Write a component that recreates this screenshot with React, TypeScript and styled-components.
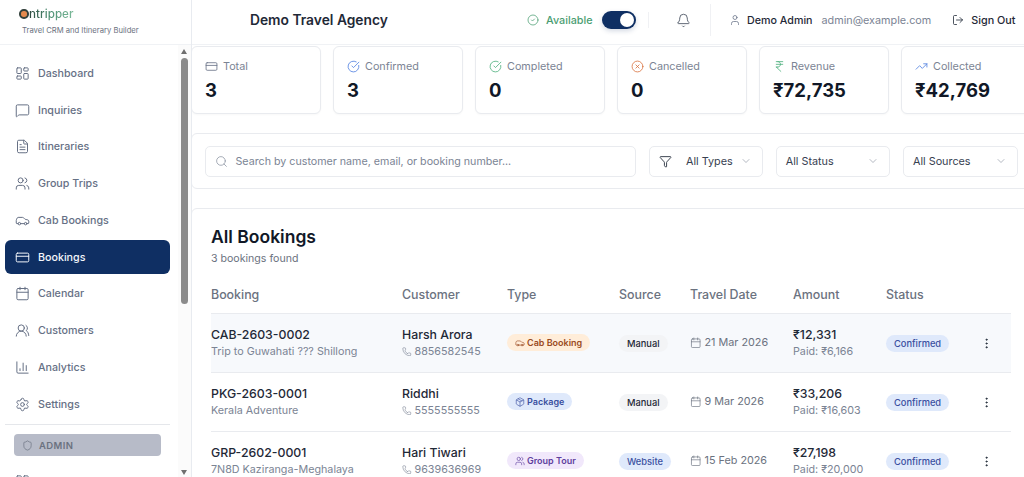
import React from "react";
import styled, { createGlobalStyle } from "styled-components";
import {
  Bell, Calendar, Car, ChartColumn, ChevronDown, CircleCheck, CircleCheckBig, CircleX, CreditCard,
  FileText, Filter, IndianRupee, LayoutDashboard, LogOut, MessageSquare, MoreVertical, Package,
  Phone, Search, Settings, Shield, TrendingUp, User, Users, UsersRound,
} from "lucide-react";

const Global = createGlobalStyle`
  html, body { margin: 0; padding: 0; height: 100%; overflow: hidden; background: #fff; }
  body { font-family: Inter, "Noto Sans", sans-serif; color: #111827; }
  #root { height: 100%; }
  * { box-sizing: border-box; }
`;

const Page = styled.div`
  display: flex;
  width: 1024px;
  height: 477px;
  overflow: hidden;
`;

const Sidebar = styled.aside`
  position: relative;
  flex: 0 0 192px;
  height: 477px;
  border-right: 1px solid #e8ebf0;
  overflow: hidden;
  display: flex;
  flex-direction: column;
`;

const Brand = styled.div`
  flex: 0 0 45px;
  padding: 6px 0 0 19px;
  border-bottom: 1px solid #f0f2f5;
`;

const LogoRow = styled.div`
  display: flex;
  align-items: center;
  height: 16px;
  font-size: 11.6px;
  font-weight: 500;
  letter-spacing: 0.05px;
`;

const LogoMark = styled.span`
  width: 9.5px;
  height: 9.5px;
  border-radius: 50%;
  border: 2.6px solid #33413c;
  background: #e58a4e;
  margin-right: 0.5px;
`;

const LogoText = styled.span`
  background: linear-gradient(90deg, #2f4a40 0%, #4c8f72 45%, #7dbb9b 100%);
  -webkit-background-clip: text;
  background-clip: text;
  color: transparent;
`;

const Tagline = styled.div`
  margin: 4px 0 0 3px;
  font-size: 7.65px;
  color: #6b7280;
  line-height: 10px;
  white-space: nowrap;
`;

const Nav = styled.nav`
  padding: 11.5px 21px 0 5px;
  display: flex;
  flex-direction: column;
  gap: 3px;
`;

const NavItem = styled.div<{ $active?: boolean }>`
  display: flex;
  align-items: center;
  gap: 8.5px;
  height: 33.75px;
  flex: none;
  padding-left: 9.5px;
  border-radius: 6px;
  font-size: 10.7px;
  font-weight: 500;
  background: ${(p) => (p.$active ? "#0f2f63" : "transparent")};
  color: ${(p) => (p.$active ? "#f3f6fb" : "#667085")};
`;

const Divider = styled.div`
  height: 1px;
  background: #e5e7eb;
  margin: 0 0 6px;
  flex: none;
`;

const RoleTag = styled.div`
  display: flex;
  align-items: center;
  gap: 6px;
  flex: none;
  height: 22px;
  margin: 0 9px 6px;
  padding-left: 8px;
  border-radius: 4px;
  background: #b7bbc8;
  color: #6b7280;
  font-size: 9.5px;
  font-weight: 600;
  letter-spacing: 0.4px;
`;

const ScrollTrack = styled.div`
  position: absolute;
  top: 45px;
  right: 0;
  bottom: 0;
  width: 13px;
  background: #fbfbfb;
`;

const ScrollThumb = styled.div`
  position: absolute;
  top: 13px;
  left: 3px;
  width: 7px;
  height: 246px;
  border-radius: 4px;
  background: #8b8b8b;
`;

const ScrollArrow = styled.div<{ $down?: boolean }>`
  position: absolute;
  left: 3px;
  width: 0;
  height: 0;
  border-left: 3.5px solid transparent;
  border-right: 3.5px solid transparent;
  ${(p) =>
    p.$down
      ? "bottom: 2px; border-top: 5px solid #6f6f6f;"
      : "top: 4px; border-bottom: 5px solid #6f6f6f;"}
`;

const Main = styled.main`
  flex: 0 0 833px;
  margin-left: -1px;
  height: 477px;
  overflow: hidden;
`;

const Header = styled.header`
  display: flex;
  align-items: center;
  height: 45px;
  padding: 0 0 4px 59px;
  border-bottom: 1px solid #f0f2f5;
  white-space: nowrap;
`;

const AgencyName = styled.div`
  width: 277px;
  font-size: 13.8px;
  font-weight: 600;
  color: #1f2937;
`;

const Status = styled.div`
  display: flex;
  align-items: center;
  gap: 7px;
  width: 75px;
  font-size: 10.8px;
  font-weight: 500;
  color: #4a9d72;
`;

const Toggle = styled.div`
  position: relative;
  width: 34px;
  height: 18px;
  border-radius: 9px;
  background: #0f2f63;
  box-shadow: 0 2px 5px rgba(15, 47, 99, 0.18);
  flex: none;
`;

const Knob = styled.span`
  position: absolute;
  top: 2px;
  right: 2px;
  width: 14px;
  height: 14px;
  border-radius: 50%;
  background: #fff;
`;

const VRule = styled.div<{ $h: number; $left?: number }>`
  width: 1px;
  height: ${(p) => p.$h}px;
  margin-left: ${(p) => p.$left ?? 0}px;
  background: #f0f1f4;
  flex: none;
`;

const BellBox = styled.div`
  display: flex;
  justify-content: center;
  width: 61px;
  padding-left: 8px;
  color: #4b5563;
`;

const UserBox = styled.div`
  display: flex;
  align-items: center;
  gap: 5px;
  padding-left: 18px;
  font-size: 10.7px;
  font-weight: 500;
  color: #1f2937;
`;

const AdminName = styled.span`
  margin-left: 1px;
`;

const Email = styled.span`
  margin-left: 4px;
  font-weight: 400;
  color: #7b8494;
  font-size: 10.8px;
`;

const SignOut = styled.div`
  display: flex;
  align-items: center;
  gap: 7px;
  margin-left: 21px;
  font-size: 10.8px;
  font-weight: 500;
  color: #1f2937;
`;

const Content = styled.div`
  width: 840px;
  padding-top: 1px;
  display: flex;
  flex-direction: column;
  gap: 19px;
`;

const Stats = styled.div`
  display: flex;
  gap: 12px;
`;

const StatCard = styled.div`
  flex: 0 0 130px;
  height: 68px;
  padding: 12px 13px 0;
  background: #fff;
  border: 1px solid #e9ebef;
  border-radius: 6px;
  box-shadow: 0 1px 2px rgba(16, 24, 40, 0.03);
`;

const StatLabel = styled.div`
  display: flex;
  align-items: center;
  gap: 5px;
  height: 14px;
  font-size: 10.8px;
  color: #7b8494;
`;

const StatValue = styled.div`
  margin-top: 5px;
  font-size: 18.5px;
  line-height: 24px;
  font-weight: 700;
  color: #111827;
`;

const FilterCard = styled.div`
  display: flex;
  align-items: center;
  gap: 12.75px;
  height: 56px;
  padding: 0 12.5px;
  border: 1px solid #e9ebef;
  border-radius: 6px;
`;

const SearchBox = styled.div`
  flex: 1;
  display: flex;
  align-items: center;
  gap: 8px;
  height: 31px;
  padding-left: 9px;
  border: 1px solid #e9ebef;
  border-radius: 5px;
  color: #7b8494;
  font-size: 10.7px;
`;

const SelectBox = styled.div`
  flex: 0 0 114.5px;
  display: flex;
  align-items: center;
  height: 31px;
  padding: 0 10px 0 9px;
  border: 1px solid #e9ebef;
  border-radius: 5px;
  font-size: 10.8px;
  color: #374151;
`;

const SelectText = styled.span<{ $indent?: boolean }>`
  flex: 1;
  margin-left: ${(p) => (p.$indent ? "14.5px" : "0")};
  white-space: nowrap;
`;

const ListCard = styled.section`
  height: 300px;
  padding: 18px 19px 0;
  border: 1px solid #e9ebef;
  border-radius: 6px 0 0 0;
`;

const ListTitle = styled.h2`
  margin: 0;
  font-size: 17.5px;
  line-height: 20px;
  font-weight: 600;
  color: #111827;
`;

const ListSub = styled.div`
  margin-top: 5px;
  font-size: 10.6px;
  line-height: 14px;
  color: #6b7280;
`;

const Row = styled.div<{ $head?: boolean; $hi?: boolean }>`
  display: grid;
  grid-template-columns: 191px 105px 112px 71px 103px 93px 92px 1fr;
  align-items: center;
  height: ${(p) => (p.$head ? "32px" : "59px")};
  border-bottom: 1px solid #e9ebef;
  background: ${(p) => (p.$hi ? "#f7f9fc" : "transparent")};
  ${(p) => p.$head && "margin-top: 16px; color: #6b7280; font-size: 12.4px; font-weight: 500; padding-bottom: 6px;"}
`;

const Strong = styled.div`
  font-size: 12.3px;
  line-height: 16px;
  font-weight: 500;
  color: #1f2937;
  white-space: nowrap;
`;

const Sub = styled.div`
  display: flex;
  align-items: center;
  gap: 3px;
  margin-top: 1px;
  font-size: 10.75px;
  line-height: 16px;
  color: #7b8494;
  white-space: nowrap;
`;

const Badge = styled.span<{ $bg: string; $fg: string }>`
  display: inline-flex;
  align-items: center;
  gap: 2px;
  height: 17px;
  margin-top: -1px;
  padding: 0 8px;
  border-radius: 9px;
  justify-self: start;
  background: ${(p) => p.$bg};
  color: ${(p) => p.$fg};
  font-size: 9px;
  font-weight: 600;
  white-space: nowrap;
`;

const Pill = styled(Badge)`
  margin-top: 1px;
  font-size: 9.3px;
  font-weight: 500;
`;

const DateCell = styled.div`
  display: flex;
  align-items: center;
  gap: 3px;
  margin-top: -1px;
  font-size: 10.8px;
  color: #6b7280;
  white-space: nowrap;
`;

const Kebab = styled.div`
  display: flex;
  padding-left: 2px;
  color: #1f2937;
`;

const navItems = [
  { label: "Dashboard", icon: LayoutDashboard },
  { label: "Inquiries", icon: MessageSquare },
  { label: "Itineraries", icon: FileText },
  { label: "Group Trips", icon: Users },
  { label: "Cab Bookings", icon: Car },
  { label: "Bookings", icon: CreditCard, active: true },
  { label: "Calendar", icon: Calendar },
  { label: "Customers", icon: UsersRound },
  { label: "Analytics", icon: ChartColumn },
  { label: "Settings", icon: Settings },
];

const stats = [
  { label: "Total", value: "3", icon: CreditCard, color: "#667085" },
  { label: "Confirmed", value: "3", icon: CircleCheckBig, color: "#4f7fe0" },
  { label: "Completed", value: "0", icon: CircleCheckBig, color: "#4caf7d" },
  { label: "Cancelled", value: "0", icon: CircleX, color: "#d9723f" },
  { label: "Revenue", value: "₹72,735", icon: IndianRupee, color: "#4caf7d" },
  { label: "Collected", value: "₹42,769", icon: TrendingUp, color: "#4f7fe0" },
];

const typeStyles = {
  cab: { bg: "#ffedd9", fg: "#9a4a22", icon: Car, label: "Cab Booking" },
  pkg: { bg: "#dfe9fb", fg: "#3a4fa0", icon: Package, label: "Package" },
  grp: { bg: "#f1e8fb", fg: "#5f3f9e", icon: Users, label: "Group Tour" },
};

const rows = [
  { id: "CAB-2603-0002", trip: "Trip to Guwahati ??? Shillong", name: "Harsh Arora", phone: "8856582545", type: typeStyles.cab, source: "Manual", date: "21 Mar 2026", amount: "₹12,331", paid: "Paid: ₹6,166" },
  { id: "PKG-2603-0001", trip: "Kerala Adventure", name: "Riddhi", phone: "5555555555", type: typeStyles.pkg, source: "Manual", date: "9 Mar 2026", amount: "₹33,206", paid: "Paid: ₹16,603" },
  { id: "GRP-2602-0001", trip: "7N8D Kaziranga-Meghalaya", name: "Hari Tiwari", phone: "9639636969", type: typeStyles.grp, source: "Website", date: "15 Feb 2026", amount: "₹27,198", paid: "Paid: ₹20,000" },
];

export default function App() {
  return (
    <Page>
      <Global />
      <Sidebar>
        <Brand>
          <LogoRow>
            <LogoMark />
            <LogoText>ntripper</LogoText>
          </LogoRow>
          <Tagline>Travel CRM and Itinerary Builder</Tagline>
        </Brand>
        <Nav>
          {navItems.map((n) => (
            <NavItem key={n.label} $active={n.active}>
              <n.icon size={15} strokeWidth={1.6} />
              {n.label}
            </NavItem>
          ))}
          <Divider />
          <RoleTag>
            <Shield size={11} strokeWidth={1.5} />
            ADMIN
          </RoleTag>
          <NavItem>
            <LayoutDashboard size={15} strokeWidth={1.6} />
          </NavItem>
        </Nav>
        <ScrollTrack>
          <ScrollArrow />
          <ScrollThumb />
          <ScrollArrow $down />
        </ScrollTrack>
      </Sidebar>
      <Main>
        <Header>
          <AgencyName>Demo Travel Agency</AgencyName>
          <Status>
            <CircleCheck size={12} strokeWidth={1.5} />
            Available
          </Status>
          <Toggle>
            <Knob />
          </Toggle>
          <VRule $h={16} $left={12} />
          <BellBox>
            <Bell size={15} strokeWidth={1.4} />
          </BellBox>
          <VRule $h={32} />
          <UserBox>
            <User size={12} strokeWidth={1.5} color="#667085" />
            <AdminName>Demo Admin</AdminName>
            <Email>admin@example.com</Email>
          </UserBox>
          <SignOut>
            <LogOut size={12} strokeWidth={1.6} />
            Sign Out
          </SignOut>
        </Header>
        <Content>
          <Stats>
            {stats.map((s) => (
              <StatCard key={s.label}>
                <StatLabel>
                  <s.icon size={13} strokeWidth={1.5} color={s.color} />
                  {s.label}
                </StatLabel>
                <StatValue>{s.value}</StatValue>
              </StatCard>
            ))}
          </Stats>
          <FilterCard>
            <SearchBox>
              <Search size={13} strokeWidth={1.4} color="#8b93a1" />
              Search by customer name, email, or booking number...
            </SearchBox>
            <SelectBox>
              <Filter size={13} strokeWidth={1.6} color="#1f2937" />
              <SelectText $indent>All Types</SelectText>
              <ChevronDown size={12} strokeWidth={1.3} color="#8b93a1" />
            </SelectBox>
            <SelectBox>
              <SelectText>All Status</SelectText>
              <ChevronDown size={12} strokeWidth={1.3} color="#8b93a1" />
            </SelectBox>
            <SelectBox>
              <SelectText>All Sources</SelectText>
              <ChevronDown size={12} strokeWidth={1.3} color="#8b93a1" />
            </SelectBox>
          </FilterCard>
          <ListCard>
            <ListTitle>All Bookings</ListTitle>
            <ListSub>3 bookings found</ListSub>
            <Row $head>
              <div>Booking</div>
              <div>Customer</div>
              <div>Type</div>
              <div>Source</div>
              <div>Travel Date</div>
              <div>Amount</div>
              <div>Status</div>
              <div />
            </Row>
            {rows.map((r, i) => (
              <Row key={r.id} $hi={i === 0}>
                <div>
                  <Strong>{r.id}</Strong>
                  <Sub>{r.trip}</Sub>
                </div>
                <div>
                  <Strong>{r.name}</Strong>
                  <Sub>
                    <Phone size={9.5} strokeWidth={1.5} />
                    {r.phone}
                  </Sub>
                </div>
                <Badge $bg={r.type.bg} $fg={r.type.fg}>
                  <r.type.icon size={10} strokeWidth={1.5} />
                  {r.type.label}
                </Badge>
                <Pill
                  $bg={r.source === "Website" ? "#dfe9fb" : "#f3f4f6"}
                  $fg={r.source === "Website" ? "#3a4fa0" : "#1f2937"}
                >
                  {r.source}
                </Pill>
                <DateCell>
                  <Calendar size={11.5} strokeWidth={1.4} />
                  {r.date}
                </DateCell>
                <div>
                  <Strong>{r.amount}</Strong>
                  <Sub>{r.paid}</Sub>
                </div>
                <Pill $bg="#dfe9fb" $fg="#3a4fa0">Confirmed</Pill>
                <Kebab>
                  <MoreVertical size={13} strokeWidth={1.8} />
                </Kebab>
              </Row>
            ))}
          </ListCard>
        </Content>
      </Main>
    </Page>
  );
}
